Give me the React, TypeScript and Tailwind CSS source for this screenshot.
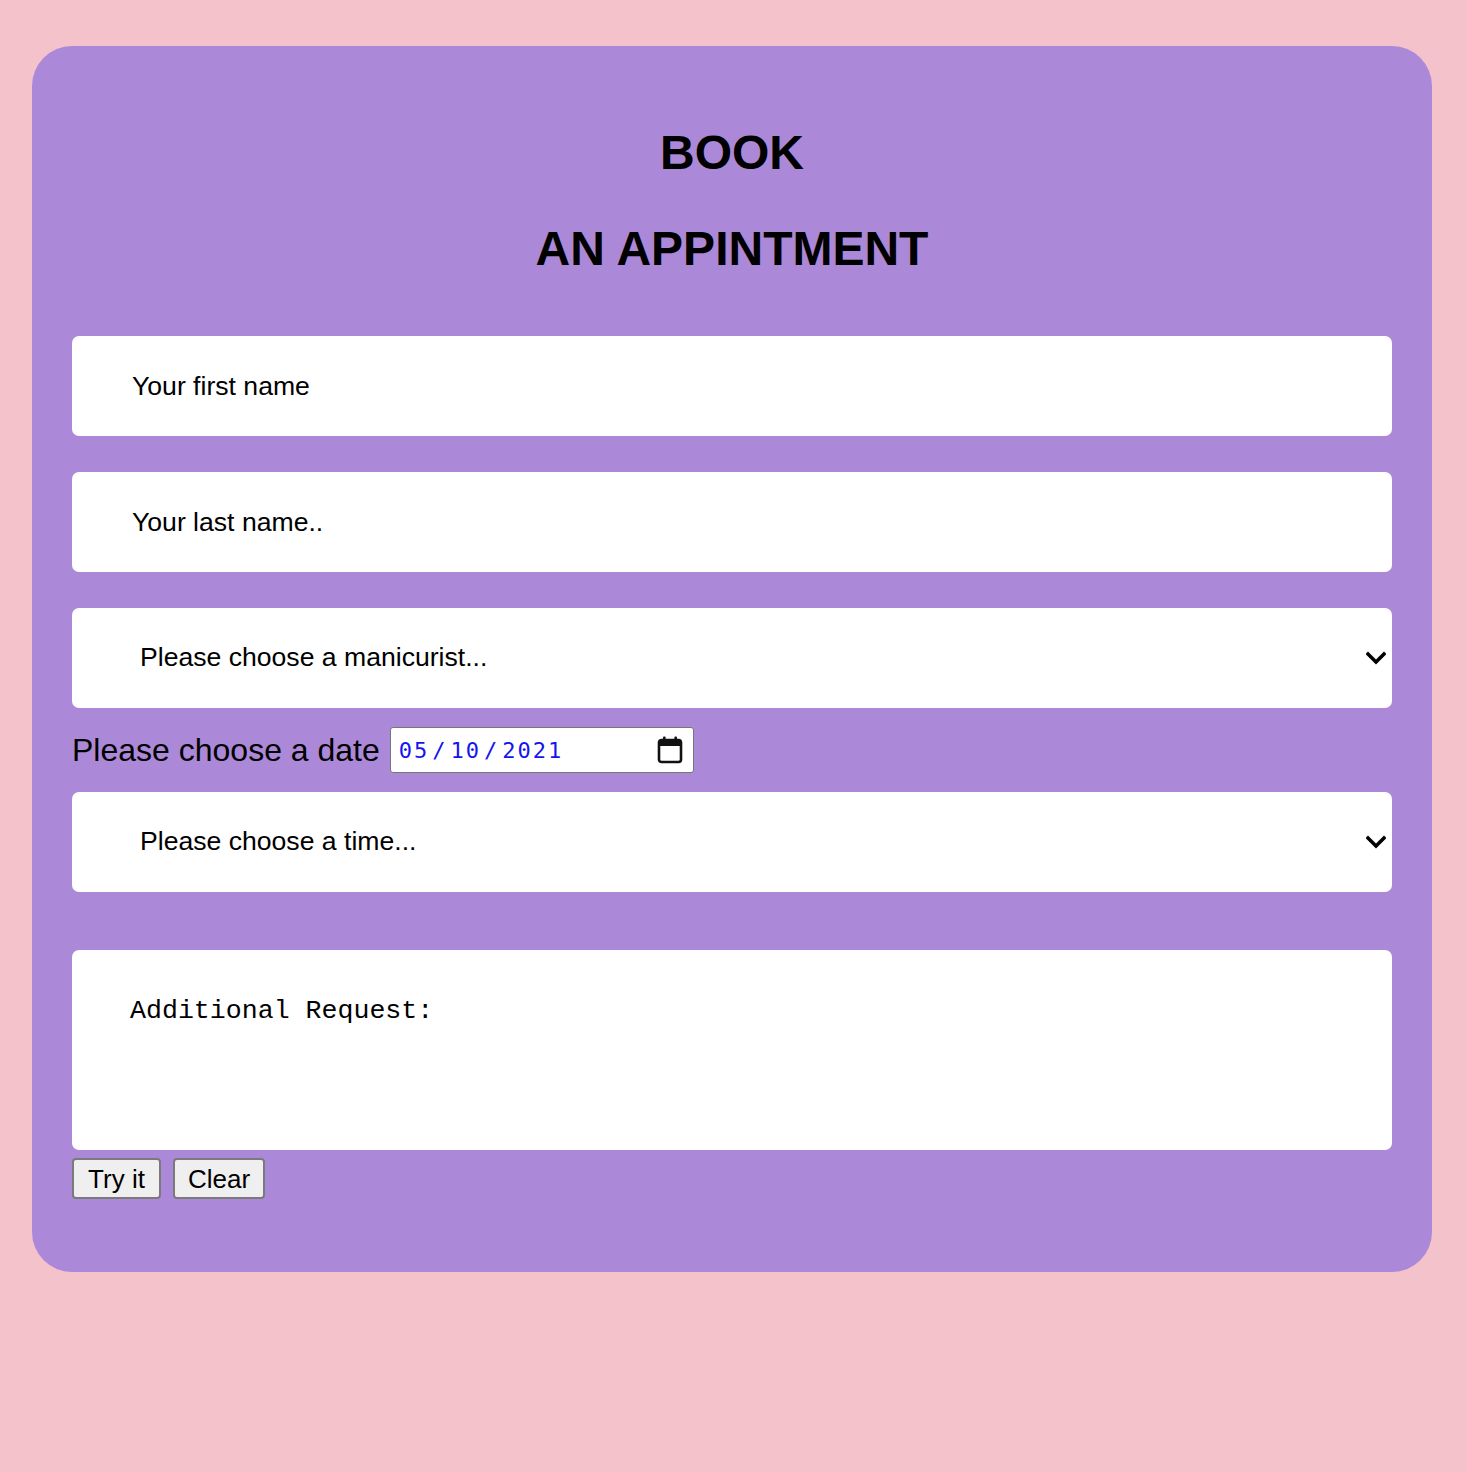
import { ChangeEvent, useState } from "react";

const field =
	"w-full h-[100px] rounded-[7px] bg-white text-black outline-none text-[26.6px] font-['Liberation_Sans',Arial,sans-serif]";

function Chevron() {
	return (
		<svg
			width="20"
			height="14"
			viewBox="0 0 20 14"
			className="pointer-events-none absolute right-[6px] top-1/2 -translate-y-1/2"
		>
			<polyline
				points="2,3 10,11 18,3"
				fill="none"
				stroke="black"
				strokeWidth="3.4"
				strokeLinecap="square"
			/>
		</svg>
	);
}

function SelectField({ label, options }: { label: string; options: string[] }) {
	return (
		<div className="relative">
			<select
				defaultValue=""
				className={`${field} appearance-none pl-[68px] pr-10`}
			>
				<option value="">{label}</option>
				{options.map((o) => (
					<option key={o}>{o}</option>
				))}
			</select>
			<Chevron />
		</div>
	);
}

function CalendarIcon() {
	return (
		<svg width="28" height="30" viewBox="0 0 28 30">
			<rect x="3" y="5" width="22" height="22" rx="2.5" fill="none" stroke="#111" strokeWidth="2.6" />
			<rect x="3" y="5" width="22" height="6" fill="#111" />
			<rect x="7" y="1.5" width="2.6" height="5" rx="1" fill="#111" />
			<rect x="18.4" y="1.5" width="2.6" height="5" rx="1" fill="#111" />
		</svg>
	);
}

export default function App() {
	const [request, setRequest] = useState("");

	return (
		<div className="min-h-[1472px] bg-[#f4c2cb] pl-8 pr-[34px] pt-[46px] font-['Liberation_Sans',Arial,sans-serif]">
			<div className="rounded-[40px] bg-[#ab89d8] px-10 pt-[79px] pb-[73px]">
				<div className="flex flex-col items-center gap-[40px] text-[48px] font-bold leading-[56px] text-black">
					<h1>BOOK</h1>
					<h1>AN APPINTMENT</h1>
				</div>

				<form className="mt-[59px] flex flex-col" onSubmit={(e) => e.preventDefault()}>
					<div className="flex flex-col gap-[36px]">
						<input
							className={`${field} pl-[60px] placeholder:text-black`}
							placeholder="Your first name"
						/>
						<input
							className={`${field} pl-[60px] placeholder:text-black`}
							placeholder="Your last name.."
						/>
						<SelectField
							label="Please choose a manicurist..."
							options={["Anna", "Bella", "Chloe"]}
						/>
					</div>

					<div className="mt-[19px] flex items-center gap-[10px]">
						<span className="text-[32px] leading-none text-black">Please choose a date</span>
						<div className="flex h-[46px] w-[304px] items-center justify-between rounded-[3px] border-[1.5px] border-[#767676] bg-white pl-[8px] pr-[9px]">
							<span className="flex items-center gap-[3px] font-['DejaVu_Sans_Mono',monospace] text-[22px] tracking-[2px] text-[#1414f0]">
								<span>05</span>
								<span>/</span>
								<span>10</span>
								<span>/</span>
								<span>2021</span>
							</span>
							<CalendarIcon />
						</div>
					</div>

					<div className="mt-[19px]">
						<SelectField
							label="Please choose a time..."
							options={["10:00", "12:00", "14:00", "16:00"]}
						/>
					</div>

					<textarea
						value={request}
						onChange={(e: ChangeEvent<HTMLTextAreaElement>) => setRequest(e.target.value)}
						placeholder="Additional Request:"
						className="mt-[58px] h-[200px] w-full resize-none rounded-[7px] bg-white pl-[58px] pt-[42px] font-['Liberation_Mono','Courier_New',monospace] text-[26.6px] text-black outline-none placeholder:text-black"
					/>

					<div className="mt-[8px] flex gap-[12px]">
						<button
							type="submit"
							className="h-[41px] w-[89px] rounded-[4px] border-2 border-[#7a7a7a] bg-[#efefef] text-[26px] leading-none text-black"
						>
							Try it
						</button>
						<button
							type="button"
							onClick={() => setRequest("")}
							className="h-[41px] w-[92px] rounded-[4px] border-2 border-[#7a7a7a] bg-[#efefef] text-[26px] leading-none text-black"
						>
							Clear
						</button>
					</div>
				</form>
			</div>
		</div>
	);
}
